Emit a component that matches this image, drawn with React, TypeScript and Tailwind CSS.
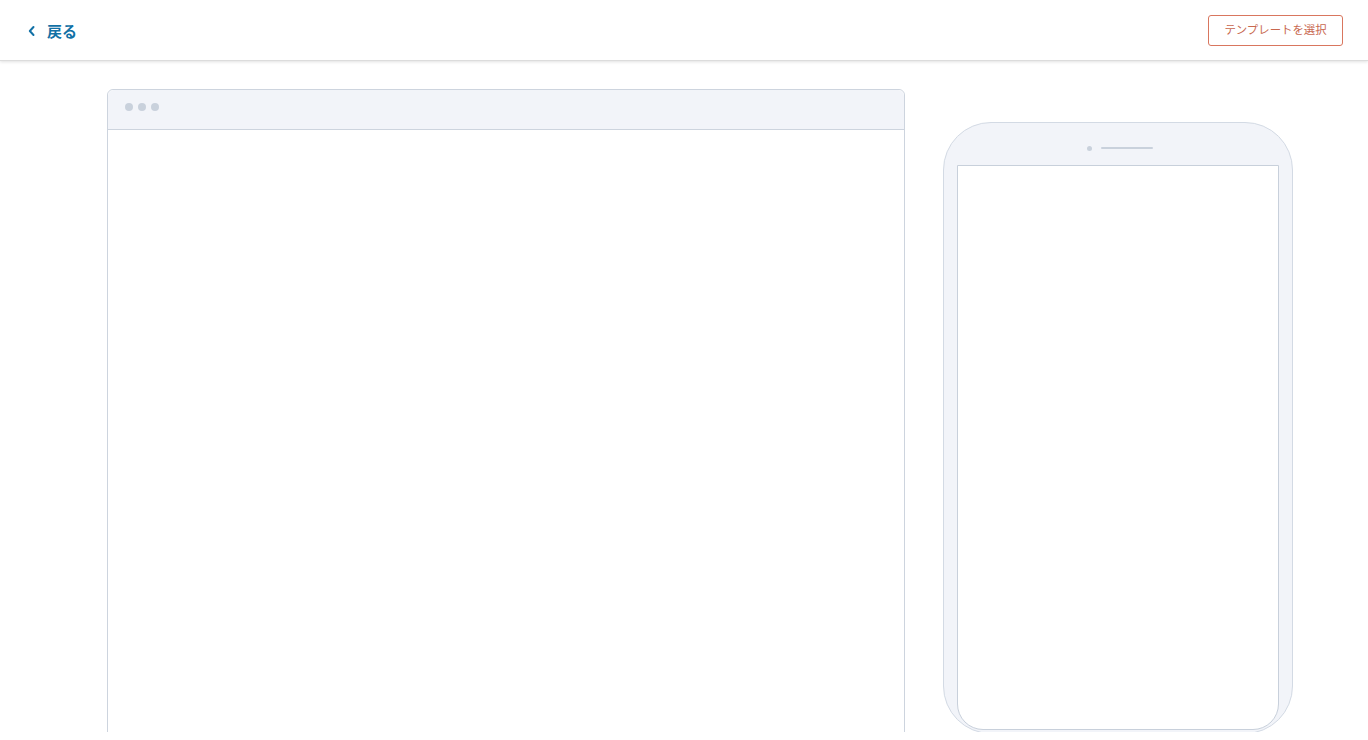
import React from "react";

export default function App() {
  return (
    <div
      className="w-[1368px] h-[740px] bg-white overflow-hidden flex flex-col"
      style={{ fontFamily: '"Noto Sans CJK JP", "Noto Sans", sans-serif' }}
    >
      <header className="h-[61px] shrink-0 flex items-center justify-between pl-[27px] pr-[25px] border-b border-[#dcdcdc] shadow-[0_1px_3px_rgba(0,0,0,0.12)] relative z-10">
        <button className="flex items-center gap-[10px] text-[#1271a6]">
          <svg width="10" height="12" viewBox="0 0 10 12" className="mt-[1px]">
            <path d="M6.5 2 L2.8 6 L6.5 10" fill="none" stroke="#1271a6" strokeWidth="2" strokeLinecap="round" strokeLinejoin="round" />
          </svg>
          <span className="text-[15px] font-bold leading-none">戻る</span>
        </button>
        <button className="h-[31px] w-[135px] border border-[#d9765e] rounded-[3px] text-[11.4px] text-[#c8684f] leading-none flex items-center justify-center">
          テンプレートを選択
        </button>
      </header>
      <main className="h-[671px] shrink-0 overflow-hidden flex items-start pl-[107px] pt-[28px] gap-[38px]">
        <div className="w-[798px] h-[700px] shrink-0 border border-[#cdd4de] rounded-t-[6px] bg-white">
          <div className="h-[40px] bg-[#f2f4f9] border-b border-[#cdd4de] rounded-t-[6px] flex items-start gap-[5px] pl-[17px] pt-[13px]">
            <span className="w-[8px] h-[8px] rounded-full bg-[#c9d1dc]" />
            <span className="w-[8px] h-[8px] rounded-full bg-[#c9d1dc]" />
            <span className="w-[8px] h-[8px] rounded-full bg-[#c9d1dc]" />
          </div>
        </div>
        <div className="mt-[33px] w-[350px] h-[612px] shrink-0 rounded-[48px] bg-[#f2f4f9] border border-[#d3dae4] flex flex-col items-center pt-[21px] pb-[3px] px-[13px]">
          <div className="flex items-center gap-[9px] h-[8px] pl-[3px]">
            <span className="w-[5px] h-[5px] rounded-full bg-[#c9d1dc]" />
            <span className="w-[52px] h-[2px] rounded-full bg-[#c9d1dc]" />
          </div>
          <div className="mt-[13px] w-full flex-1 bg-white border border-[#c8d0db] rounded-b-[26px]" />
        </div>
      </main>
    </div>
  );
}
